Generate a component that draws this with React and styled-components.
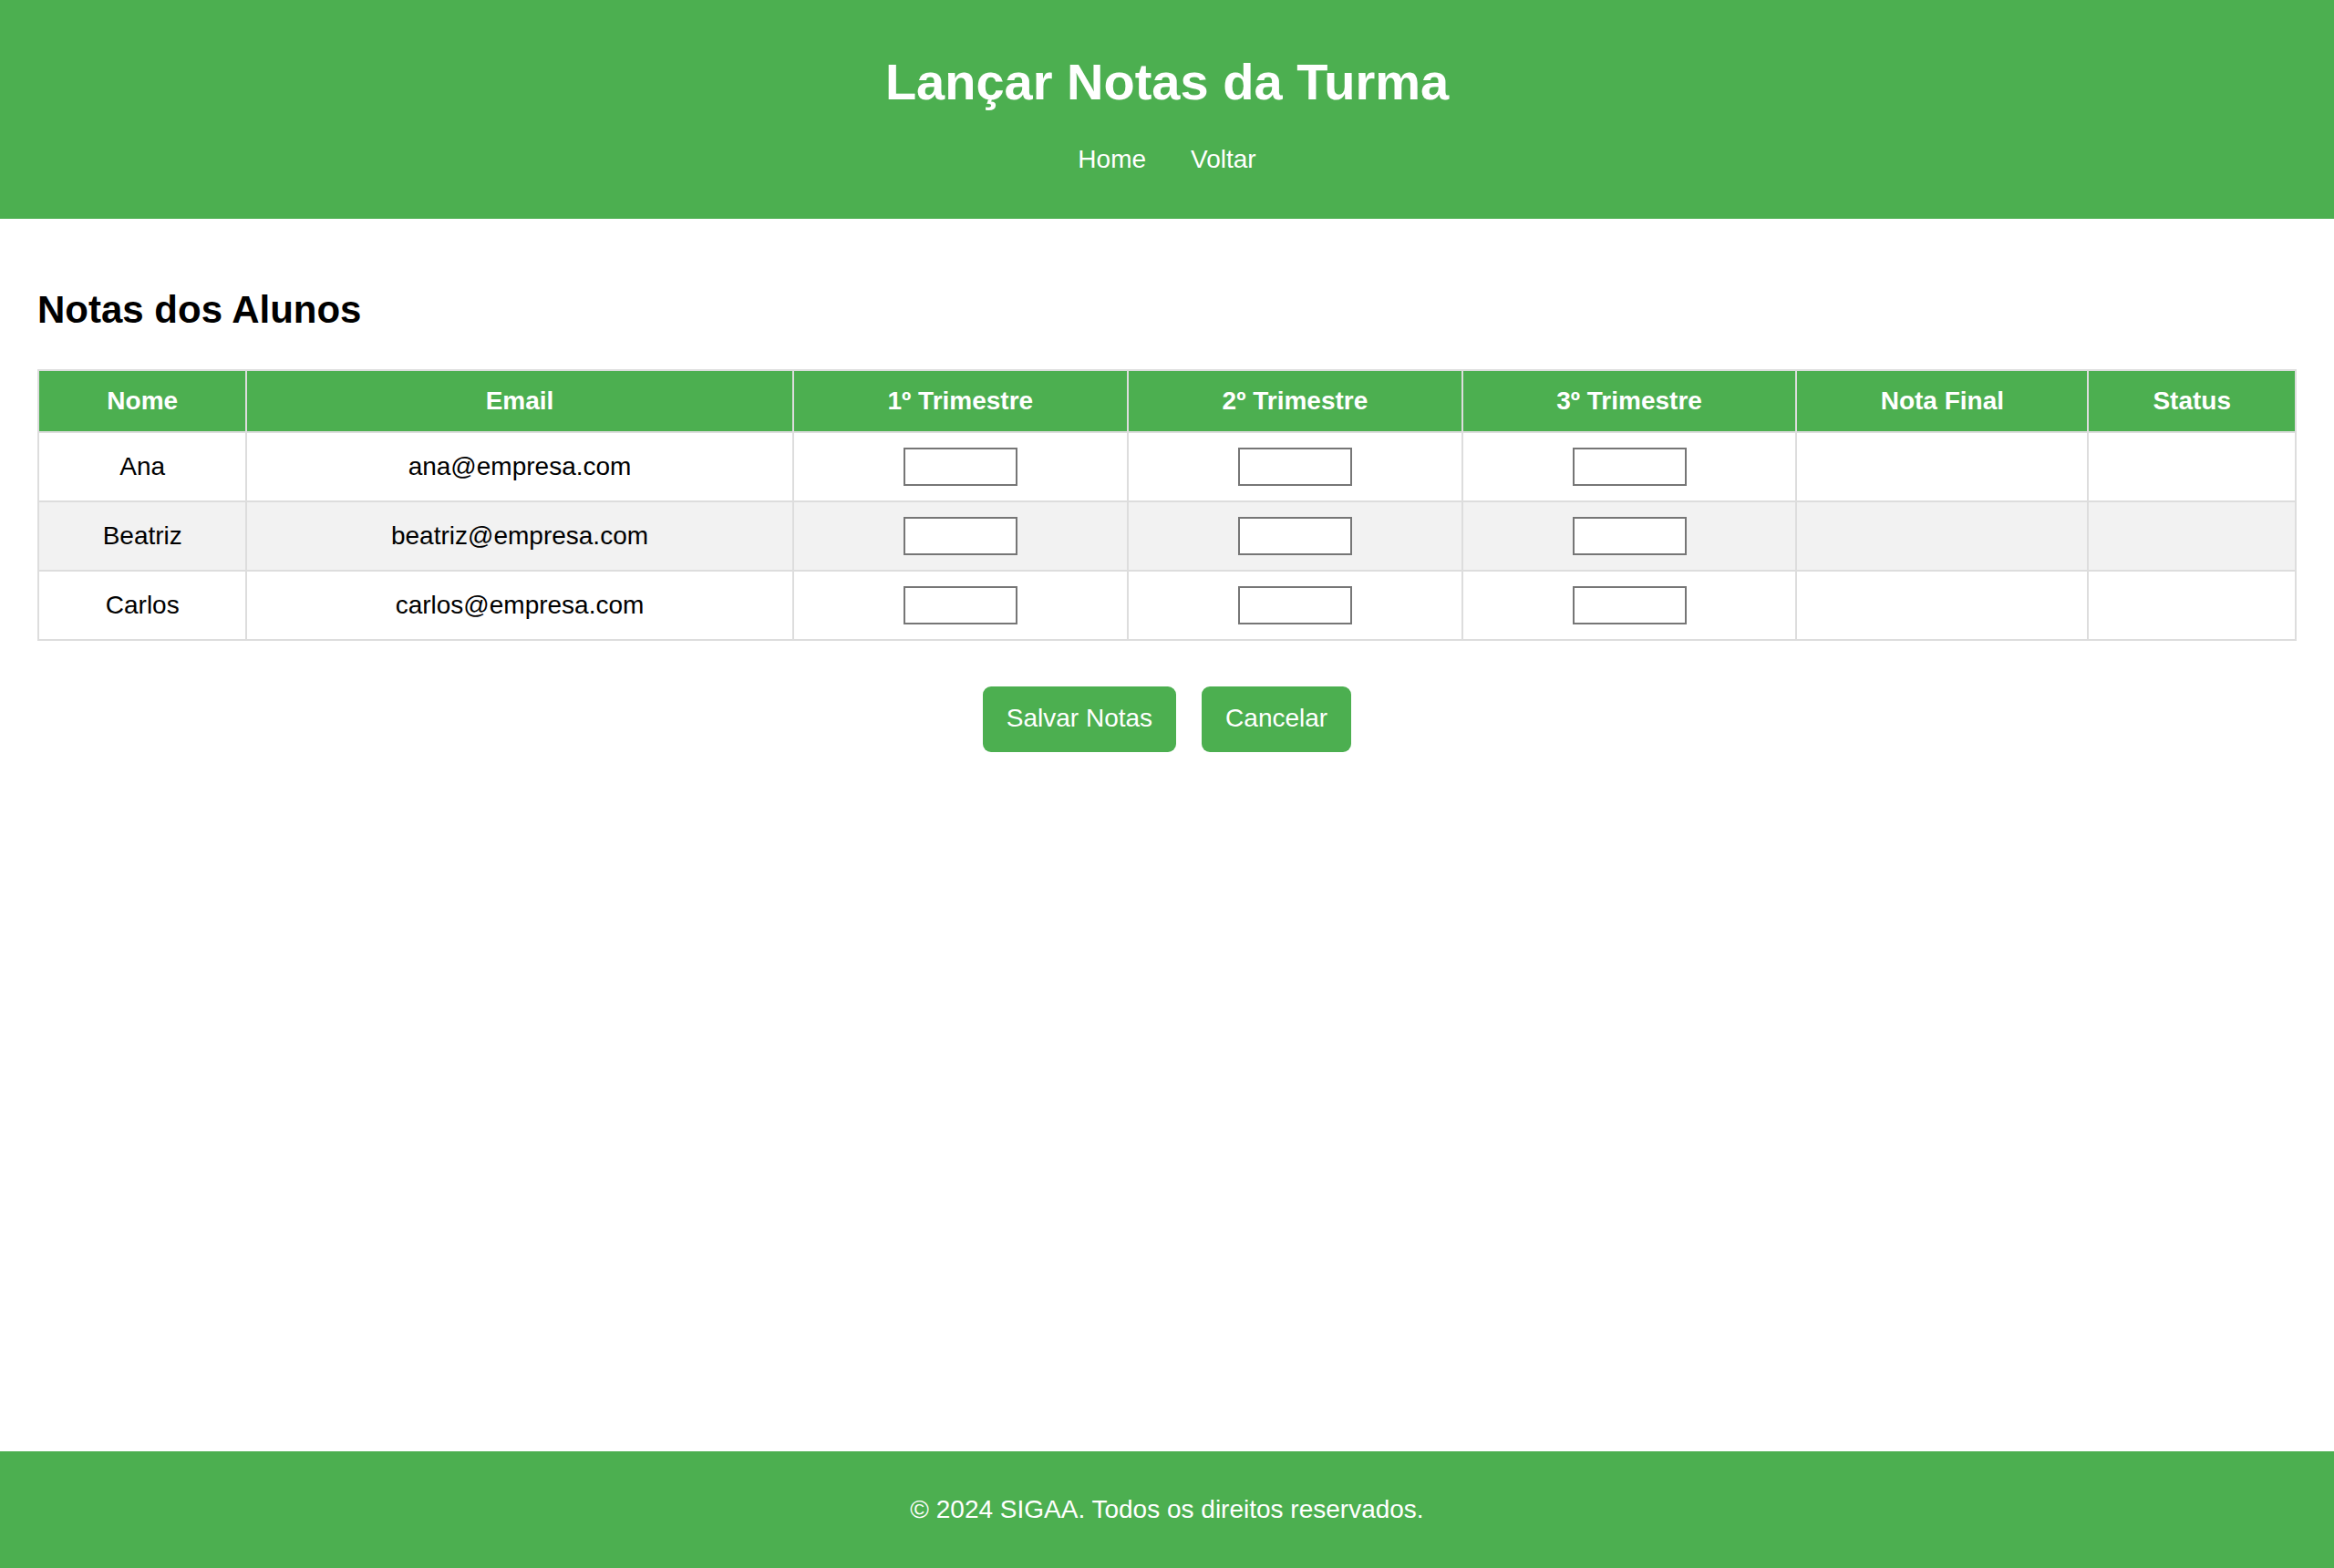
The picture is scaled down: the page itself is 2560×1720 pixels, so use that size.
import React from 'react';
import styled, { createGlobalStyle } from 'styled-components';

const GlobalStyle = createGlobalStyle`
  html, body {
    margin: 0;
    padding: 0;
    background: #ffffff;
  }
  body {
    font-family: "Liberation Sans", Arial, sans-serif;
    font-size: 28px;
    color: #000;
  }
`;

const Page = styled.div`
  min-height: 100vh;
  display: flex;
  flex-direction: column;
`;

const Header = styled.header`
  background-color: #4caf50;
  color: #fff;
  text-align: center;
  padding: 58px 0 49px;
`;

const Title = styled.h1`
  margin: 0 0 38px;
  font-size: 56px;
  line-height: 63px;
  font-weight: bold;
`;

const Nav = styled.nav`
  display: flex;
  justify-content: center;
  gap: 49px;
  line-height: 32px;
`;

const NavLink = styled.a`
  color: #fff;
  text-decoration: none;
  font-size: 28px;
`;

const Main = styled.main`
  flex: 1;
  padding: 76px 41px 0;
`;

const SectionTitle = styled.h2`
  margin: 0 0 41px;
  font-size: 42px;
  line-height: 48px;
  font-weight: bold;
`;

const Table = styled.table`
  width: 100%;
  border-collapse: collapse;
  table-layout: fixed;
`;

const HeadCell = styled.th`
  width: ${p => p.$width}%;
  background-color: #4caf50;
  color: #fff;
  font-weight: bold;
  font-size: 28px;
  line-height: 32px;
  padding: 17px 0;
  border: 2px solid #dddddd;
  text-align: center;
`;

const Row = styled.tr`
  background-color: ${p => (p.$striped ? '#f2f2f2' : '#ffffff')};
`;

const Cell = styled.td`
  font-size: 28px;
  line-height: 32px;
  height: 42px;
  padding: 16px 0;
  border: 2px solid #dddddd;
  text-align: center;
  vertical-align: middle;
`;

const GradeInput = styled.input`
  box-sizing: border-box;
  width: 125px;
  height: 42px;
  border: 2px solid #767676;
  background: #fff;
  display: block;
  margin: 0 auto;
  font-size: 24px;
`;

const Actions = styled.div`
  display: flex;
  justify-content: center;
  gap: 28px;
  margin-top: 50px;
`;

const Button = styled.button`
  background-color: #4caf50;
  color: #fff;
  border: none;
  border-radius: 9px;
  padding: 19px 26px 21px;
  font-family: "Liberation Sans", Arial, sans-serif;
  font-size: 28px;
  line-height: 32px;
  cursor: pointer;
`;

const Footer = styled.footer`
  background-color: #4caf50;
  color: #fff;
  text-align: center;
  height: 128px;
  display: flex;
  align-items: center;
  justify-content: center;
  font-size: 28px;
`;

const columns = [
  { label: 'Nome', width: 9.2 },
  { label: 'Email', width: 24.25 },
  { label: '1º Trimestre', width: 14.85 },
  { label: '2º Trimestre', width: 14.81 },
  { label: '3º Trimestre', width: 14.81 },
  { label: 'Nota Final', width: 12.92 },
  { label: 'Status', width: 9.16 },
];

const alunos = [
  { nome: 'Ana', email: 'ana@empresa.com' },
  { nome: 'Beatriz', email: 'beatriz@empresa.com' },
  { nome: 'Carlos', email: 'carlos@empresa.com' },
];

export default function App() {
  return (
    <Page>
      <GlobalStyle />
      <Header>
        <Title>Lançar Notas da Turma</Title>
        <Nav>
          <NavLink href="#">Home</NavLink>
          <NavLink href="#">Voltar</NavLink>
        </Nav>
      </Header>

      <Main>
        <SectionTitle>Notas dos Alunos</SectionTitle>
        <Table>
          <thead>
            <tr>
              {columns.map(c => (
                <HeadCell key={c.label} $width={c.width}>{c.label}</HeadCell>
              ))}
            </tr>
          </thead>
          <tbody>
            {alunos.map((a, i) => (
              <Row key={a.email} $striped={i % 2 === 1}>
                <Cell>{a.nome}</Cell>
                <Cell>{a.email}</Cell>
                <Cell><GradeInput type="number" /></Cell>
                <Cell><GradeInput type="number" /></Cell>
                <Cell><GradeInput type="number" /></Cell>
                <Cell></Cell>
                <Cell></Cell>
              </Row>
            ))}
          </tbody>
        </Table>

        <Actions>
          <Button>Salvar Notas</Button>
          <Button>Cancelar</Button>
        </Actions>
      </Main>

      <Footer>© 2024 SIGAA. Todos os direitos reservados.</Footer>
    </Page>
  );
}
